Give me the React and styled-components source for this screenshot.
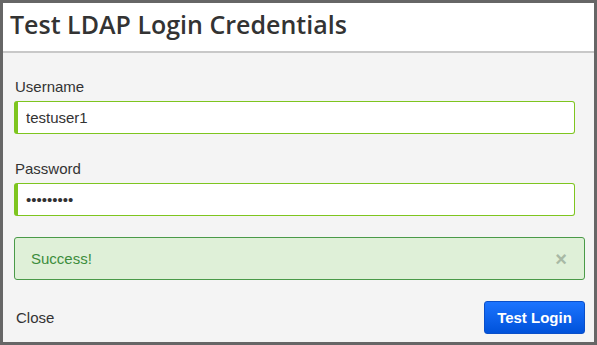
import { useState } from "react"
import styled, { createGlobalStyle } from "styled-components"

const Global = createGlobalStyle`
  html, body { margin: 0; padding: 0; background: #666; }
  body { font-family: "Liberation Sans", Arial, sans-serif; }
  * { box-sizing: border-box; }
`

const Dialog = () => {
  const [user, setUser] = useState("testuser1")
  const [pass, setPass] = useState("secret123")
  const [shown, setShown] = useState(true)

  return (
    <Modal>
      <Global />
      <Header>
        <Title>Test LDAP Login Credentials</Title>
      </Header>
      <Body>
        <Field $gap={26}>
          <Label>Username</Label>
          <Input value={user} onChange={(e) => setUser(e.target.value)} />
        </Field>
        <Field $gap={21}>
          <Label>Password</Label>
          <Input type="password" value={pass} onChange={(e) => setPass(e.target.value)} />
        </Field>
        {shown && (
          <Alert>
            <span>Success!</span>
            <Dismiss onClick={() => setShown(false)}>×</Dismiss>
          </Alert>
        )}
        <Footer>
          <CloseLink>Close</CloseLink>
          <Primary>Test Login</Primary>
        </Footer>
      </Body>
    </Modal>
  )
}

const Modal = styled.div`
  width: 597px;
  height: 345px;
  border: 3px solid #666;
  background: #f4f4f4;
  display: flex;
  flex-direction: column;
`
const Header = styled.div`
  background: #fff;
  height: 50px;
  border-bottom: 2px solid #c8c8c8;
  padding: 4px 0 0 7px;
`
const Title = styled.h1`
  margin: 0;
  font-family: "Open Sans", Lato, sans-serif;
  font-weight: 600;
  font-size: 25px;
  color: #333;
`
const Body = styled.div`
  flex: 1;
  padding: 25px 8px 0 11px;
  display: flex;
  flex-direction: column;
  align-items: flex-start;
`
const Field = styled.div`
  display: flex;
  flex-direction: column;
  margin-bottom: ${(p) => p.$gap}px;
`
const Label = styled.label`
  font-size: 15px;
  line-height: 17px;
  color: #333;
  margin-bottom: 6px;
  padding-left: 1px;
`
const Input = styled.input`
  width: 561px;
  height: 33px;
  border: 1px solid #7ec51f;
  border-left: 4px solid #7ec51f;
  border-radius: 3px;
  background: #fff;
  padding: 0 10px 0 8px;
  font-family: "Liberation Sans", Arial, sans-serif;
  font-size: 15px;
  color: #333;
  outline: none;
`
const Alert = styled.div`
  height: 43px;
  width: 571px;
  border: 1px solid #4a9a48;
  border-radius: 3px;
  background: #dff0d8;
  color: #3c8d3c;
  font-size: 15px;
  display: flex;
  align-items: center;
  justify-content: space-between;
  padding: 0 17px 0 16px;
`
const Dismiss = styled.button`
  border: none;
  background: none;
  padding: 0;
  font-size: 20px;
  font-weight: 700;
  color: #a8b9a5;
  cursor: pointer;
  line-height: 1;
`
const Footer = styled.div`
  display: flex;
  align-items: center;
  justify-content: space-between;
  margin-top: 21px;
  width: 571px;
`
const CloseLink = styled.a`
  font-size: 15px;
  color: #333;
  padding-left: 2px;
  cursor: pointer;
`
const Primary = styled.button`
  width: 101px;
  height: 33px;
  border: 1px solid #0a4fc9;
  border-radius: 3px;
  background: linear-gradient(#1c74ff, #0052da);
  color: #fff;
  font-family: "Liberation Sans", Arial, sans-serif;
  font-weight: 700;
  font-size: 15px;
  cursor: pointer;
`

export default Dialog
